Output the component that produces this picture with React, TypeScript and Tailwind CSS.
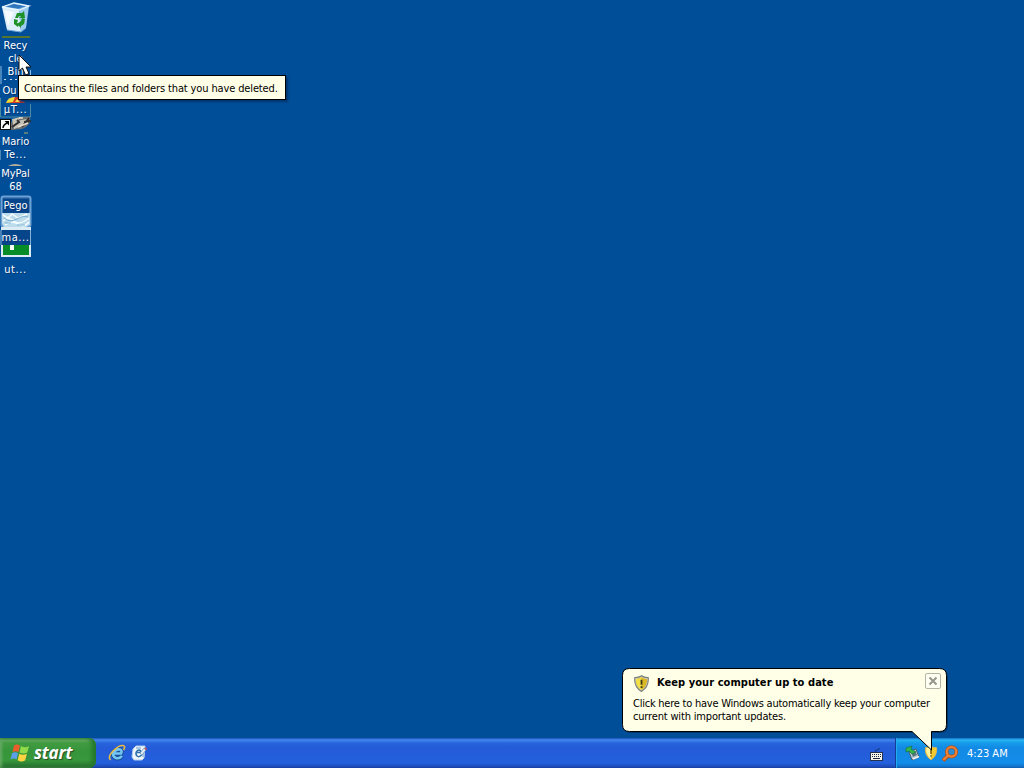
import React from "react";

function Label({ lines, className = "" }: { lines: string[]; className?: string }) {
  return (
    <div className={`whitespace-nowrap text-center text-[11px] leading-[13px] text-white [text-shadow:1px_1px_0_#003474] ${className}`}>
      {lines.map((line) => (
        <div key={line} className={line.endsWith("...") ? "tracking-[0.6px]" : ""}>{line}</div>
      ))}
    </div>
  );
}

function IconArt() {
  return (
    <svg className="absolute left-0 top-0" width="34" height="260" viewBox="0 0 34 260">
      <path d="M2 7 L19 10 L21 32 L7 30 Z" fill="#dceefa" />
      <path d="M19 10 L29 6 L26 28 L21 32 Z" fill="#9ccbf0" />
      <path d="M2 7 L14 3 L29 6 L19 10 Z" fill="#6ba6dc" />
      <path d="M6 7 L14 4 L26 6 L18 8.5 Z" fill="#2f76bd" />
      <path d="M2 7 L19 10 L29 6 L14 3 Z" fill="none" stroke="#e9f7ff" strokeWidth="1.3" />
      <path d="M4 10 L14 12 L8 26 Z" fill="#fff" opacity=".7" />
      <path d="M7 30 L21 32 L26 28" fill="none" stroke="#6aa3d5" />
      <g fill="#1f9227">
        <path d="M15 18 L17 13 L22 13 L24 11 L25 18 L19 18 L21 16 L19 16 L18 18Z" />
        <path d="M14 19 L18 20 L17 23 L19 24 L18 27 L14 24 Z" />
        <path d="M22 18 L25 19 L24 24 L21 26 L21 28 L17 24 L21 21 Z" />
      </g>
      <rect x="2" y="36" width="28" height="2" fill="#55752f" />
      <path d="M1 66 V84 M30.5 70 V76" stroke="#8cbce1" />
      <path d="M4 79.5 H6 M10 79.5 H12 M15 79.5 H17" stroke="#c8def0" />
      <path d="M6 103 Q9 97 16 97 Q23 97 25 103 Z" fill="#d83923" />
      <path d="M6 103 Q8 97 15 97 L13 102 Z" fill="#edda3c" />
      <path d="M15 102 L17 99 L20 102 Z" fill="#f4d949" />
      <rect x="1" y="103" width="29" height="13" fill="#004e98" />
      <path d="M.5 98 V117 H30.5 V104" fill="none" stroke="#4c8ba1" />
      <path d="M10 124 Q15 115 30 117 Q32 125 22 129 L11 130 Z" fill="#6d7172" />
      <path d="M12 119 L21 117 L17 121 L27 119 L22 126 L14 129" fill="#c7c5b8" />
      <path d="M12 127 L19 122 L17 120 M22 127 L29 118 M24 122 L31 121" fill="none" stroke="#302f32" strokeWidth="2" />
      <path d="M18 127 L28 123 M19 118 L23 118" stroke="#eadfd0" strokeWidth="1.5" />
      <path d="M24 133 H28" stroke="#b5ae63" />
      <path d="M.5 150 V160" stroke="#4587b5" />
      <path d="M8 166 Q15 162 23 166 Z" fill="#b5ad9c" />
      <rect x="1.5" y="196.5" width="29" height="30" rx="2" fill="#1e5b9f" stroke="#6da1d4" strokeWidth="2" />
      <rect x="3" y="199" width="26" height="14" fill="#07458b" />
      <path d="M2 213 H30 V225 L26 227 H4 L2 224 Z" fill="#bddceb" />
      <path d="M3 215 L8 218 L12 214 L18 218 L27 214 M3 221 Q9 216 14 221 T29 218 M5 225 Q12 220 18 224 T29 222" fill="none" stroke="#f2fcff" strokeWidth="1.5" />
      <path d="M4 218 Q10 223 17 219 T28 217 M5 223 H11 M17 225 H25" fill="none" stroke="#79afcf" />
      <path d="M1 227 H31 V257 H1Z" fill="#dcecf4" />
      <rect x="1" y="230" width="30" height="15" fill="#07458b" />
      <path d="M1 230 V245 M30.5 230 V245" stroke="#87b2d8" />
      <rect x="3" y="245" width="26" height="10" fill="#078d27" />
      <rect x="10" y="245" width="4" height="5" fill="#f3fff3" />
      <rect x="0" y="119" width="11" height="11" fill="#fff" />
      <rect x=".5" y="119.5" width="10" height="10" fill="none" stroke="#111" />
      <path d="M3 128 Q3 125 7 123" fill="none" stroke="#000" strokeWidth="1.4" />
      <path d="M4.5 121 H9 V125.5 Z" fill="#000" />
    </svg>
  );
}

function DesktopIcons() {
  return (
    <div className="relative h-[280px] w-[31px]">
      <IconArt />
      <div className="relative flex flex-col gap-[6px] pt-[39px]">
        <Label lines={["Recy", "cle", "Bin"]} />
        <Label lines={["Ou"]} className="pr-[12px]" />
        <Label lines={["µT..."]} />
        <Label lines={["Mario", "Te..."]} className="pt-[13px]" />
        <Label lines={["MyPal", "68"]} />
        <Label lines={["Pego"]} />
        <Label lines={["ma..."]} className="pt-[13px]" />
        <Label lines={["ut..."]} className="pt-[13px]" />
      </div>
    </div>
  );
}

function BalloonShield() {
  return (
    <svg width="17" height="17" viewBox="0 0 16 16">
      <path d="M8 .7 Q11 2.6 14.3 2.4 Q15.2 11 8 15.5 Q.7 11 1.7 2.4 Q5 2.6 8 .7Z" fill="#c8c9b8" stroke="#777b76" />
      <path d="M8 2.2 Q10.5 3.8 13.3 3.7 Q13.6 10.5 8 14.2 Q2.4 10.5 2.7 3.7 Q5.5 3.8 8 2.2Z" fill="#dcb923" />
      <path d="M8 2.2 Q5.5 3.8 2.7 3.7 Q2.4 10.5 8 14.2Z" fill="#f3df46" />
      <path d="M8 4.5 V9.2 M8 10.6 V12.2" stroke="#3d3a1b" strokeWidth="1.7" />
    </svg>
  );
}

function TrayShield() {
  return (
    <svg className="ml-[2px]" width="14" height="16" viewBox="0 0 15 16">
      <path d="M7.5 .7 Q10 2.5 13.5 2.3 Q14.3 11 7.5 15.3 Q.7 11 1.5 2.3 Q5 2.5 7.5 .7Z" fill="#f4cc30" stroke="#dfb758" />
      <path d="M7.5 1.5 Q5 3 2.4 3 Q2 10.5 7.5 14.3Z" fill="#fff3a0" />
      <path d="M7.5 4 V9 M7.5 10.5 V12" stroke="#7c5c0f" strokeWidth="1.6" />
    </svg>
  );
}

function Balloon() {
  return (
    <div className="absolute left-[622px] top-[668px] z-20 h-[90px] w-[328px]">
      <svg className="absolute inset-0" width="328" height="90" viewBox="0 0 328 90">
        <path d="M9 3 H319 Q326 3 326 10 V58 Q326 65 319 65 H9 Q2 65 2 58 V10 Q2 3 9 3Z" fill="#002f61" opacity=".75" />
        <path d="M7.5 .5 H317.5 Q324.5 .5 324.5 7.5 V56.5 Q324.5 63.5 317.5 63.5 H309.5 V82 L290 63.5 H7.5 Q.5 63.5 .5 56.5 V7.5 Q.5 .5 7.5 .5Z" fill="#ffffe7" stroke="#000" />
      </svg>
      <div className="relative flex h-[64px] w-[325px] items-start pl-[11px] pr-[6px] text-[11px] text-black">
        <div className="min-w-0 flex-1 pt-[7px]">
          <div className="flex h-[16px] items-center">
            <BalloonShield />
            <span className="whitespace-nowrap pl-[7px] pt-px font-bold tracking-[0.06px]">Keep your computer up to date</span>
          </div>
          <div className="whitespace-nowrap pt-[6px] leading-[13px]">
            <div className="tracking-[-0.235px]">Click here to have Windows automatically keep your computer</div>
            <div className="tracking-[-0.17px]">current with important updates.</div>
          </div>
        </div>
        <button className="mt-[5px] flex h-[16px] w-[16px] shrink-0 items-center justify-center rounded-[2px] border border-[#b5b5a5] bg-[#fffff2]" aria-label="Close">
          <svg width="10" height="10" viewBox="0 0 10 10"><path d="M1.5 1.5 L8.5 8.5 M8.5 1.5 L1.5 8.5" stroke="#96968c" strokeWidth="2" /></svg>
        </button>
      </div>
    </div>
  );
}

function WindowsFlag() {
  return (
    <svg width="20" height="20" viewBox="0 0 20 20">
      <path d="M4 2.5 Q7 .7 10 2.5 L8.5 9 Q5.5 7.3 2.5 9Z" fill="#ec5d2b" />
      <path d="M11 3 Q15 5.5 19 3 L17.3 9.5 Q13.5 11.5 9.5 9.5Z" fill="#8fdb49" />
      <path d="M2 10.3 Q5 8.3 8 10.3 L6.5 16.5 Q4 14.5 .5 16.5Z" fill="#5b9ee9" />
      <path d="M9.2 10.7 Q13 13 16.9 10.7 L15.2 17.3 Q11.5 19.7 7.7 17.3Z" fill="#ffd342" />
    </svg>
  );
}

function Taskbar() {
  return (
    <footer className="flex h-[30px] w-full bg-[linear-gradient(to_bottom,#1f52bc_0px,#4288f0_2px,#2864dd_5px,#245bd8_10px,#2460dc_25px,#1b48b4_29px,#193e9c_30px)]">
      <button className="flex h-full w-[96px] items-center rounded-r-[7px] bg-[linear-gradient(to_bottom,#338139_0px,#68ad65_2px,#419b41_5px,#36943a_13px,#38983b_22px,#2b7d33_27px,#225d32_30px)] pl-[10px] shadow-[inset_-4px_0_4px_#24772b,inset_2px_0_3px_#66aa65]">
        <WindowsFlag />
        <span className="pl-[4px] font-['Open_Sans',sans-serif] text-[17px] font-bold italic leading-[18px] tracking-[-0.2px] text-white [font-stretch:normal] [text-shadow:1px_1px_1px_#244b26]">start</span>
      </button>
      <div className="flex items-center gap-[5px] pl-[12px]">
        <svg width="18" height="18" viewBox="0 0 18 18">
          <path d="M14 12 Q11.5 15 8 14 Q4 12.5 5.5 8.5 Q8 4.5 12 5.5 Q14.5 6.5 13 9.5 H6.5" fill="none" stroke="#174f94" strokeWidth="4.5" />
          <path d="M14 12 Q11.5 15 8 14 Q4 12.5 5.5 8.5 Q8 4.5 12 5.5 Q14.5 6.5 13 9.5 H6.5" fill="none" stroke="#74c5f2" strokeWidth="2.7" />
          <path d="M2.5 16 Q-.5 13 5 7 Q11 1 15 1.5 Q18 2 15.5 6" fill="none" stroke="#e9bb43" strokeWidth="1.6" />
        </svg>
        <svg width="17" height="18" viewBox="0 0 17 18">
          <path d="M2 5 L5 2 H14 L13 14 L11 16 H3 L1 13Z" fill="#f0f6fa" stroke="#b3cfeb" />
          <path d="M10.5 11 Q8 14 5.5 11.5 Q4 8.5 6.5 6.5 Q9.5 5 10 8.5 H6" fill="none" stroke="#2b6ea9" strokeWidth="1.5" />
          <path d="M5 4 H10 M12 7 V13" stroke="#6a95c2" />
          <path d="M9 9 L13 4 L15 6 L11 11Z" fill="#e8f0f5" stroke="#3b74ad" strokeWidth=".6" />
          <path d="M13 5 L15 3 L16 6Z" fill="#cb514b" />
        </svg>
      </div>
      <div className="ml-auto flex h-full">
        <div className="flex w-[25px] items-center pt-[3px]">
          <svg width="14" height="14" viewBox="0 0 14 14">
            <path d="M6 4 Q4 2 7 2 T9 0" fill="none" stroke="#153c76" />
            <rect x=".5" y="4.5" width="12" height="8" fill="#f6f5e9" stroke="#26334c" />
            <path d="M2 6.5 H11 M2 8.5 H11" stroke="#1e2941" strokeDasharray="1 1" />
            <path d="M3 10.5 H10" stroke="#1e2941" />
          </svg>
        </div>
        <div className="flex h-full w-[129px] items-center border-l border-[#143d98] bg-[linear-gradient(to_bottom,#1570c9_0px,#28b5f2_2px,#159bea_5px,#1289e5_10px,#128de9_25px,#126fc6_29px,#1156a0_30px)] pl-[9px] shadow-[inset_1px_0_0_#22acef]">
          <svg width="17" height="18" viewBox="0 0 17 18">
            <path d="M4 8 L11 5 L14 13 L7 16Z" fill="#bdcbd1" stroke="#465d69" />
            <path d="M6 8 L10 7 L12 11 L8 13Z" fill="#58777e" />
            <path d="M1 4 L7 2 L6 5 L11 8 L7 10 L4 7 L1 8Z" fill="#35b849" stroke="#126d40" strokeWidth=".6" />
            <path d="M8 15 L14 12.5" stroke="#eee" strokeWidth="1.5" />
          </svg>
          <TrayShield />
          <svg className="ml-[4px]" width="16" height="17" viewBox="0 0 16 17">
            <circle cx="9.5" cy="6.8" r="4.8" fill="#258cd5" stroke="#a65221" strokeWidth="3.6" />
            <path d="M6 10.5 L1 15.5" stroke="#a65221" strokeWidth="4" />
            <circle cx="9.5" cy="6.8" r="4.8" fill="none" stroke="#ee8135" strokeWidth="2.2" />
            <path d="M6 10.5 L1.3 15" stroke="#ee8135" strokeWidth="2.4" />
          </svg>
          <span className="whitespace-nowrap pl-[9px] pt-[2px] text-[11px] text-white">4:23 AM</span>
        </div>
      </div>
    </footer>
  );
}

export default function App() {
  return (
    <div className="relative flex h-[768px] w-[1024px] flex-col overflow-hidden bg-[#004e98] font-['DejaVu_Sans_Condensed','DejaVu_Sans',sans-serif] [font-stretch:condensed]">
      <main className="flex-1">
        <DesktopIcons />
      </main>
      <div className="absolute left-[18px] top-[75px] z-10 flex h-[25px] w-[268px] items-center whitespace-nowrap border border-black bg-[#ffffe7] pl-[5px] pt-[3px] text-[11px] tracking-[-0.13px] text-black shadow-[2px_2px_2px_#00356d]">Contains the files and folders that you have deleted.</div>
      <svg className="absolute left-[18px] top-[54px] z-20" width="14" height="22" viewBox="0 0 14 22">
        <path d="M1 1 V17 L4.5 14 L7.5 21 L11 19.5 L8 13 H13Z" fill="#fff" stroke="#111" />
      </svg>
      <Taskbar />
      <Balloon />
    </div>
  );
}
